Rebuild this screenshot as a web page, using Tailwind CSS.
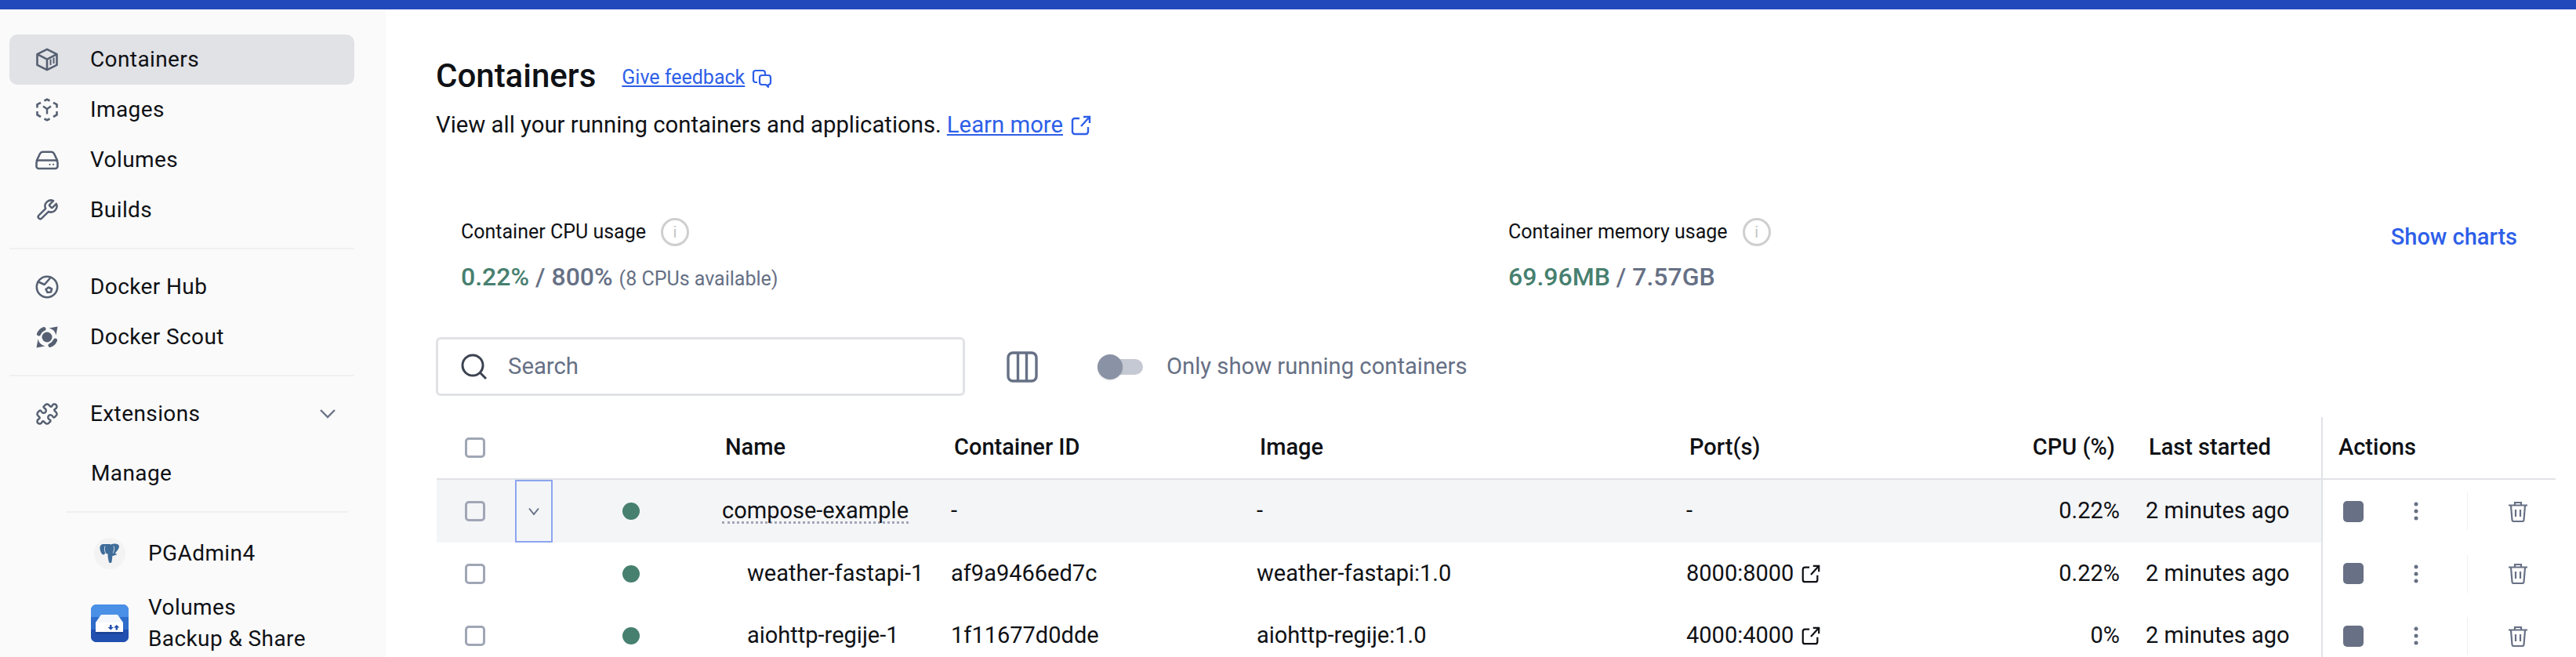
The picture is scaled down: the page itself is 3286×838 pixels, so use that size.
<!DOCTYPE html>
<html lang="en">
<head>
  <meta charset="UTF-8">
  <title>Containers</title>
  <script src="https://cdn.jsdelivr.net/npm/@tailwindcss/browser@4"></script>
</head>
<body class="bg-white font-['Roboto',sans-serif] text-[#0f1115]">
  <div class="flex flex-col h-[838px] overflow-hidden">
    <div class="h-3 shrink-0 bg-[#2249bb]"></div>
    <div class="flex flex-1 min-h-0">

      <!-- Sidebar -->
      <aside class="w-[492px] shrink-0 bg-[#fafafa] pt-8 pl-3 overflow-hidden text-[28px] tracking-[0.4px]">
        <div class="w-[440px]">
          <div class="flex items-center h-16 bg-[#e1e2e6] rounded-[10px]">
            <svg class="w-[30px] h-[30px] ml-[33px] mr-[40px] text-[#566072]" viewBox="0 0 30 30" fill="none" stroke="currentColor" stroke-width="2.6" stroke-linejoin="round"><path d="M15 1.800 27.500 8.200v13.600L15 28.200 2.500 21.800V8.200z"/><path d="M2.500 8.200 15 14.600 27.500 8.200M15 14.600v13.600"/><path d="M19.500 14.500v7.500M23.500 12.500v7.500" stroke-width="2"/></svg>
            <span>Containers</span>
          </div>
          <div class="flex items-center h-16">
            <svg class="w-[30px] h-[30px] ml-[33px] mr-[40px] text-[#566072]" viewBox="0 0 30 30" fill="none" stroke="currentColor" stroke-width="2.6"><path d="M11.500 3.500 15 1.800l3.500 1.700M23 6l4.500 2.200v4.300M27.500 17v4.500L23 24M18.500 26.500 15 28.200l-3.500-1.700M7 24l-4.500-2.500V17M2.500 12.500V8.200L7 6"/><path d="M10 10.500 15 14l5-3.500M15 14v6.500" stroke-width="2.400"/></svg>
            <span>Images</span>
          </div>
          <div class="flex items-center h-16">
            <svg class="w-[30px] h-[30px] ml-[33px] mr-[40px] text-[#566072]" viewBox="0 0 30 30" fill="none" stroke="currentColor" stroke-width="2.6"><path d="M1.500 16.500 6 7a4 4 0 0 1 3.500-2.200h11A4 4 0 0 1 24 7l4.500 9.500"/><rect x="1.500" y="15.500" width="27" height="10.500" rx="3"/><circle cx="18.500" cy="20.800" r="1.100" fill="currentColor" stroke="none"/><circle cx="23" cy="20.800" r="1.100" fill="currentColor" stroke="none"/></svg>
            <span>Volumes</span>
          </div>
          <div class="flex items-center h-16">
            <svg class="w-[30px] h-[30px] ml-[33px] mr-[40px] text-[#566072]" viewBox="0 0 24 24" fill="none" stroke="currentColor" stroke-width="2" stroke-linejoin="round"><path d="M14.700 6.300a1 1 0 0 0 0 1.400l1.600 1.600a1 1 0 0 0 1.400 0l3.770-3.770a6 6 0 0 1-7.940 7.940l-6.910 6.910a2.120 2.120 0 0 1-3-3l6.910-6.910a6 6 0 0 1 7.940-7.940l-3.760 3.760z"/></svg>
            <span>Builds</span>
          </div>
          <div class="h-0.5 bg-[#f0f0f1] mt-4 mb-4"></div>
          <div class="flex items-center h-16">
            <svg class="w-[30px] h-[30px] ml-[33px] mr-[40px] text-[#566072]" viewBox="0 0 30 30" fill="none" stroke="currentColor" stroke-width="2.6" stroke-linejoin="round"><circle cx="15" cy="15" r="13.200"/><path d="M4 8.500 11.700 12 20 2.500"/><path d="M13.500 18 17 15.500l4 2-1 4-4.500.5z"/></svg>
            <span>Docker Hub</span>
          </div>
          <div class="flex items-center h-16">
            <svg class="w-[30px] h-[30px] ml-[33px] mr-[40px] text-[#566072]" viewBox="0 0 30 30" fill="currentColor"><circle cx="15" cy="15" r="6.500"/><path d="M28.500 1.500 26.500 12.500A12 12 0 0 0 17.500 3.500zM1.500 28.500 3.500 17.500A12 12 0 0 0 12.500 26.500z"/><path d="M4.500 11A11.500 11.500 0 0 1 11 4.500M25.500 19A11.500 11.500 0 0 1 19 25.500" fill="none" stroke="currentColor" stroke-width="5" stroke-linecap="round"/></svg>
            <span>Docker Scout</span>
          </div>
          <div class="h-0.5 bg-[#f0f0f1] mt-4 mb-4"></div>
          <div class="flex items-center h-16">
            <svg class="w-[30px] h-[30px] ml-[33px] mr-[40px] text-[#566072]" viewBox="0 0 24 24" fill="none" stroke="currentColor" stroke-width="2" stroke-linejoin="round"><path d="M19.439 7.850c-.049.322.059.648.289.878l1.568 1.568c.47.47.706 1.087.706 1.704s-.235 1.233-.706 1.704l-1.611 1.611a.98.98 0 0 1-.837.276c-.47-.07-.802-.48-.968-.925a2.501 2.501 0 1 0-3.214 3.214c.446.166.855.497.925.968a.979.979 0 0 1-.276.837l-1.61 1.61a2.404 2.404 0 0 1-1.705.707 2.402 2.402 0 0 1-1.704-.706l-1.568-1.568a1.026 1.026 0 0 0-.877-.29c-.493.074-.84.504-1.02.968a2.5 2.5 0 1 1-3.237-3.237c.464-.18.894-.527.967-1.02a1.026 1.026 0 0 0-.289-.877l-1.568-1.568A2.402 2.402 0 0 1 1.998 12c0-.617.236-1.234.706-1.704L4.230 8.770c.24-.24.581-.353.917-.303.515.077.877.528 1.073 1.010a2.5 2.5 0 1 0 3.259-3.259c-.482-.196-.933-.558-1.010-1.073-.05-.336.062-.676.303-.917l1.525-1.525A2.402 2.402 0 0 1 12 1.998c.617 0 1.234.236 1.704.706l1.568 1.568c.23.23.556.338.877.29.493-.074.84-.504 1.02-.968a2.5 2.5 0 1 1 3.237 3.237c-.464.18-.894.527-.967 1.02Z"/></svg>
            <span>Extensions</span>
            <svg class="w-6 h-6 ml-auto mr-[22px] text-[#6b7486]" viewBox="0 0 24 24" fill="none" stroke="currentColor" stroke-width="2.400"><path d="m3 7 9 9 9-9"/></svg>
          </div>
          <div class="flex items-center h-16 mt-3 pl-[104px]">Manage</div>
          <div class="h-0.5 bg-[#f0f0f1] mt-4 ml-[72px] mr-2"></div>
          <div class="flex items-center h-16 mt-5 pl-[108px]">
            <div class="w-10 h-10 rounded-full bg-[#f3f3f3] flex items-center justify-center">
              <svg class="w-[26px] h-[26px]" viewBox="0 0 26 26"><path d="M6 1C2 .5 0 3 .5 7 1 11 3 14.500 5 14.500c1 0 2-1.500 2.500-2.500 1 1 2 1.500 3 1.500 0 3.500.5 7.500 1.500 10.500.5 1.500 3 1.500 3.500-.5.5-2 .5-5.500 1-7.500 2 0 4.500-1 6-2.500l-3-.5C22.500 10 25 6 25 4c0-2.500-3-3.500-6-3.500-1.500 0-3 .5-4.500 1C12 .5 9 1.300 6 1z" fill="#3f6c99"/><path d="M7 3.500c-1 3-.8 6.500.5 8.500M18 3.500c1 2.500.8 6-1 9" fill="none" stroke="#dfe7ef" stroke-width="0.900"/></svg>
            </div>
            <span class="ml-[29px]">PGAdmin4</span>
          </div>
          <div class="flex items-center mt-[17px] pl-[104px]">
            <svg class="w-12 h-12" viewBox="0 0 48 48">
              <rect width="48" height="48" rx="7" fill="#2f6dcb"/>
              <path d="M0 7a7 7 0 0 1 7-7h34a7 7 0 0 1 7 7v9H0z" fill="#4a90e6"/>
              <path d="M0 32h48v9a7 7 0 0 1-7 7H7a7 7 0 0 1-7-7z" fill="#2150b0"/>
              <path d="M6 35h35v3H6z" fill="#1c4598"/>
              <path d="M13 13h21l7 10H6z" fill="#f4f7fb"/>
              <rect x="6" y="23" width="35" height="12" fill="#fff"/>
              <path d="M24 26h2.500v3H29l-3.750 3.500L21.500 29H24zM34 32.500h-2.500v-3H29l3.750-3.500 3.750 3.500H34z" fill="#2150b0"/>
            </svg>
            <div class="ml-[25px] leading-10">Volumes<br>Backup &amp; Share</div>
          </div>
        </div>
      </aside>

      <!-- Main -->
      <main class="flex-1 min-w-0 pt-[60px] pl-[64px] pr-[26px]">
        <div class="flex items-center h-12">
          <h1 class="text-[42px] font-medium">Containers</h1>
          <a class="ml-[33px] mt-[6px] text-[25px] text-[#2e5fe8] underline">Give feedback</a>
          <svg class="w-7 h-7 ml-2 mt-2 text-[#2e5fe8]" viewBox="0 0 28 28" fill="none" stroke="currentColor" stroke-width="2.200" stroke-linejoin="round"><path d="M8 19H6a3 3 0 0 1-3-3V7a3 3 0 0 1 3-3h9a3 3 0 0 1 3 3v3"/><path d="M14 10h8a3 3 0 0 1 3 3v6a3 3 0 0 1-3 3v3l-3-3h-5a3 3 0 0 1-3-3v-6a3 3 0 0 1 3-3z"/></svg>
        </div>
        <div class="flex items-center h-9 mt-[22px] text-[29.3px]">
          <span>View all your running containers and applications.</span>
          <a class="ml-[7px] text-[#2e5fe8] underline">Learn more</a>
          <svg class="w-7 h-7 ml-[9px] text-[#2e5fe8]" viewBox="0 0 28 28" fill="none" stroke="currentColor" stroke-width="2.400"><path d="M12 5H6a3 3 0 0 0-3 3v14a3 3 0 0 0 3 3h14a3 3 0 0 0 3-3v-6M14 15 25 3M17 3h8v8"/></svg>
        </div>

        <!-- Usage stats -->
        <div class="flex items-start mt-[100px] pl-[32px] pr-[49px]">
          <div class="w-[1336px]">
            <div class="flex items-center h-9 text-[25px]">
              <span>Container CPU usage</span>
              <span class="ml-[19px] w-9 h-9 rounded-full border-[3px] border-[#cfcfcf] flex items-center justify-center text-[20px] text-[#c4c4c4]">i</span>
            </div>
            <div class="flex items-baseline h-9 mt-[15px] text-[32px] font-medium text-[#667085]">
              <span class="text-[#47806f]">0.22%</span>
              <span class="ml-2">/ 800%</span>
              <span class="ml-2 text-[25px] font-normal">(8 CPUs available)</span>
            </div>
          </div>
          <div>
            <div class="flex items-center h-9 text-[25px]">
              <span>Container memory usage</span>
              <span class="ml-[19px] w-9 h-9 rounded-full border-[3px] border-[#cfcfcf] flex items-center justify-center text-[20px] text-[#c4c4c4]">i</span>
            </div>
            <div class="flex items-baseline h-9 mt-[15px] text-[32px] font-medium text-[#667085]">
              <span class="text-[#47806f]">69.96MB</span>
              <span class="ml-2">/ 7.57GB</span>
            </div>
          </div>
          <a class="ml-auto mt-[3px] text-[29px] font-medium text-[#2e5fe8]">Show charts</a>
        </div>

        <!-- Toolbar -->
        <div class="flex items-center mt-[65px] h-[75px]">
          <div class="flex items-center w-[675px] h-[75px] bg-white border-[3px] border-[#e1e2e6] rounded-md pl-[28px]">
            <svg class="w-9 h-9 text-[#3c4250]" viewBox="0 0 36 36" fill="none" stroke="currentColor" stroke-width="3"><circle cx="16" cy="16" r="13"/><path d="m25 25 8 8"/></svg>
            <span class="ml-[25px] text-[29.3px] text-[#667085]">Search</span>
          </div>
          <svg class="w-10 h-10 ml-[53px] text-[#667085]" viewBox="0 0 40 40" fill="none" stroke="currentColor" stroke-width="3.400"><rect x="2" y="2" width="36" height="36" rx="6"/><path d="M14.500 2v36M25.500 2v36"/></svg>
          <div class="relative w-[58px] h-5 ml-[76px] rounded-full bg-[#c5c9d3]">
            <div class="absolute left-0 -top-1.5 w-8 h-8 rounded-full bg-[#8a92a5] shadow"></div>
          </div>
          <span class="ml-[30px] text-[29.2px] text-[#667085]">Only show running containers</span>
        </div>

        <!-- Table -->
        <div class="mt-[27px] ml-px text-[29px]">
          <div class="flex h-20 items-center border-b-2 border-[#e1e2e6] font-medium">
            <div class="w-[100px] pl-[36px]"><div class="w-[26px] h-[26px] rounded-[5px] border-[3px] border-[#a0a6b5] bg-white"></div></div>
            <div class="w-[264px]"></div>
            <div class="w-[292px] pl-[4px]">Name</div>
            <div class="w-[390px] pl-[4px]">Container ID</div>
            <div class="w-[548px] pl-[4px]">Image</div>
            <div class="w-[370px] pl-[4px]">Port(s)</div>
            <div class="w-[183px] pr-[6px] text-right">CPU (%)</div>
            <div class="w-[257px] pl-[37px]">Last started</div>
            <div class="flex-1 h-full flex items-center border-l-2 border-[#e1e2e6] pl-[20px]">Actions</div>
          </div>

          <div class="flex h-20 items-center">
            <div class="flex h-full items-center bg-[#f4f5f7]">
              <div class="w-[100px] pl-[36px]"><div class="w-[26px] h-[26px] rounded-[5px] border-[3px] border-[#a0a6b5]"></div></div>
              <div class="w-12 h-full border-2 border-[#8ca5f0] flex items-center justify-center">
                <svg class="w-4 h-4 text-[#667085]" viewBox="0 0 16 16" fill="none" stroke="currentColor" stroke-width="2"><path d="m2 4.500 6 7.500 6-7.500"/></svg>
              </div>
              <div class="w-[216px] pl-[89px]"><div class="w-[22px] h-[22px] rounded-full bg-[#47806f]"></div></div>
              <div class="w-[292px]"><span class="border-b-[3px] border-dotted border-[#a0a6b5] leading-7 inline-block">compose-example</span></div>
              <div class="w-[390px]">-</div>
              <div class="w-[548px]">-</div>
              <div class="w-[370px]">-</div>
              <div class="w-[183px] text-right">0.22%</div>
              <div class="w-[257px] pl-[33px]">2 minutes ago</div>
            </div>
            <div class="flex-1 h-full flex items-center border-l-2 border-[#e1e2e6]">
              <div class="w-[26px] h-[27px] ml-[26px] rounded-[5px] bg-[#677084]"></div>
              <svg class="w-2 h-6 ml-[63px] text-[#677084]" viewBox="0 0 8 24" fill="currentColor"><circle cx="4" cy="3" r="2.500"/><circle cx="4" cy="12" r="2.500"/><circle cx="4" cy="21" r="2.500"/></svg>
              <div class="w-px h-12 ml-[61px] bg-[#f0f0f1]"></div>
              <svg class="w-[26px] h-[27px] ml-[51px] text-[#677084]" viewBox="0 0 26 27" fill="none" stroke="currentColor" stroke-width="2.200"><path d="M1 5.500h24M9 5V2h8v3M4 6l1.500 18a2 2 0 0 0 2 2h11a2 2 0 0 0 2-2L22 6M10 11v9M16 11v9"/></svg>
            </div>
          </div>

          <div class="flex h-[79px] items-center">
            <div class="w-[100px] pl-[36px]"><div class="w-[26px] h-[26px] rounded-[5px] border-[3px] border-[#a0a6b5]"></div></div>
            <div class="w-12"></div>
            <div class="w-[216px] pl-[89px]"><div class="w-[22px] h-[22px] rounded-full bg-[#47806f]"></div></div>
            <div class="w-[292px] pl-8">weather-fastapi-1</div>
            <div class="w-[390px]">af9a9466ed7c</div>
            <div class="w-[548px]">weather-fastapi:1.0</div>
            <div class="w-[370px] flex items-center">8000:8000
              <svg class="w-[26px] h-[26px] ml-[9px] text-[#0f1115]" viewBox="0 0 28 28" fill="none" stroke="currentColor" stroke-width="2.400"><path d="M12 5H6a3 3 0 0 0-3 3v14a3 3 0 0 0 3 3h14a3 3 0 0 0 3-3v-6M14 15 25 3M17 3h8v8"/></svg>
            </div>
            <div class="w-[183px] text-right">0.22%</div>
            <div class="w-[257px] pl-[33px]">2 minutes ago</div>
            <div class="flex-1 h-full flex items-center border-l-2 border-[#e1e2e6]">
              <div class="w-[26px] h-[27px] ml-[26px] rounded-[5px] bg-[#677084]"></div>
              <svg class="w-2 h-6 ml-[63px] text-[#677084]" viewBox="0 0 8 24" fill="currentColor"><circle cx="4" cy="3" r="2.500"/><circle cx="4" cy="12" r="2.500"/><circle cx="4" cy="21" r="2.500"/></svg>
              <div class="w-px h-12 ml-[61px] bg-[#f0f0f1]"></div>
              <svg class="w-[26px] h-[27px] ml-[51px] text-[#677084]" viewBox="0 0 26 27" fill="none" stroke="currentColor" stroke-width="2.200"><path d="M1 5.500h24M9 5V2h8v3M4 6l1.500 18a2 2 0 0 0 2 2h11a2 2 0 0 0 2-2L22 6M10 11v9M16 11v9"/></svg>
            </div>
          </div>

          <div class="flex h-20 items-center">
            <div class="w-[100px] pl-[36px]"><div class="w-[26px] h-[26px] rounded-[5px] border-[3px] border-[#a0a6b5]"></div></div>
            <div class="w-12"></div>
            <div class="w-[216px] pl-[89px]"><div class="w-[22px] h-[22px] rounded-full bg-[#47806f]"></div></div>
            <div class="w-[292px] pl-8">aiohttp-regije-1</div>
            <div class="w-[390px]">1f11677d0dde</div>
            <div class="w-[548px]">aiohttp-regije:1.0</div>
            <div class="w-[370px] flex items-center">4000:4000
              <svg class="w-[26px] h-[26px] ml-[9px] text-[#0f1115]" viewBox="0 0 28 28" fill="none" stroke="currentColor" stroke-width="2.400"><path d="M12 5H6a3 3 0 0 0-3 3v14a3 3 0 0 0 3 3h14a3 3 0 0 0 3-3v-6M14 15 25 3M17 3h8v8"/></svg>
            </div>
            <div class="w-[183px] text-right">0%</div>
            <div class="w-[257px] pl-[33px]">2 minutes ago</div>
            <div class="flex-1 h-full flex items-center border-l-2 border-[#e1e2e6]">
              <div class="w-[26px] h-[27px] ml-[26px] rounded-[5px] bg-[#677084]"></div>
              <svg class="w-2 h-6 ml-[63px] text-[#677084]" viewBox="0 0 8 24" fill="currentColor"><circle cx="4" cy="3" r="2.500"/><circle cx="4" cy="12" r="2.500"/><circle cx="4" cy="21" r="2.500"/></svg>
              <div class="w-px h-12 ml-[61px] bg-[#f0f0f1]"></div>
              <svg class="w-[26px] h-[27px] ml-[51px] text-[#677084]" viewBox="0 0 26 27" fill="none" stroke="currentColor" stroke-width="2.200"><path d="M1 5.500h24M9 5V2h8v3M4 6l1.500 18a2 2 0 0 0 2 2h11a2 2 0 0 0 2-2L22 6M10 11v9M16 11v9"/></svg>
            </div>
          </div>
        </div>
      </main>
    </div>
  </div>
</body>
</html>
